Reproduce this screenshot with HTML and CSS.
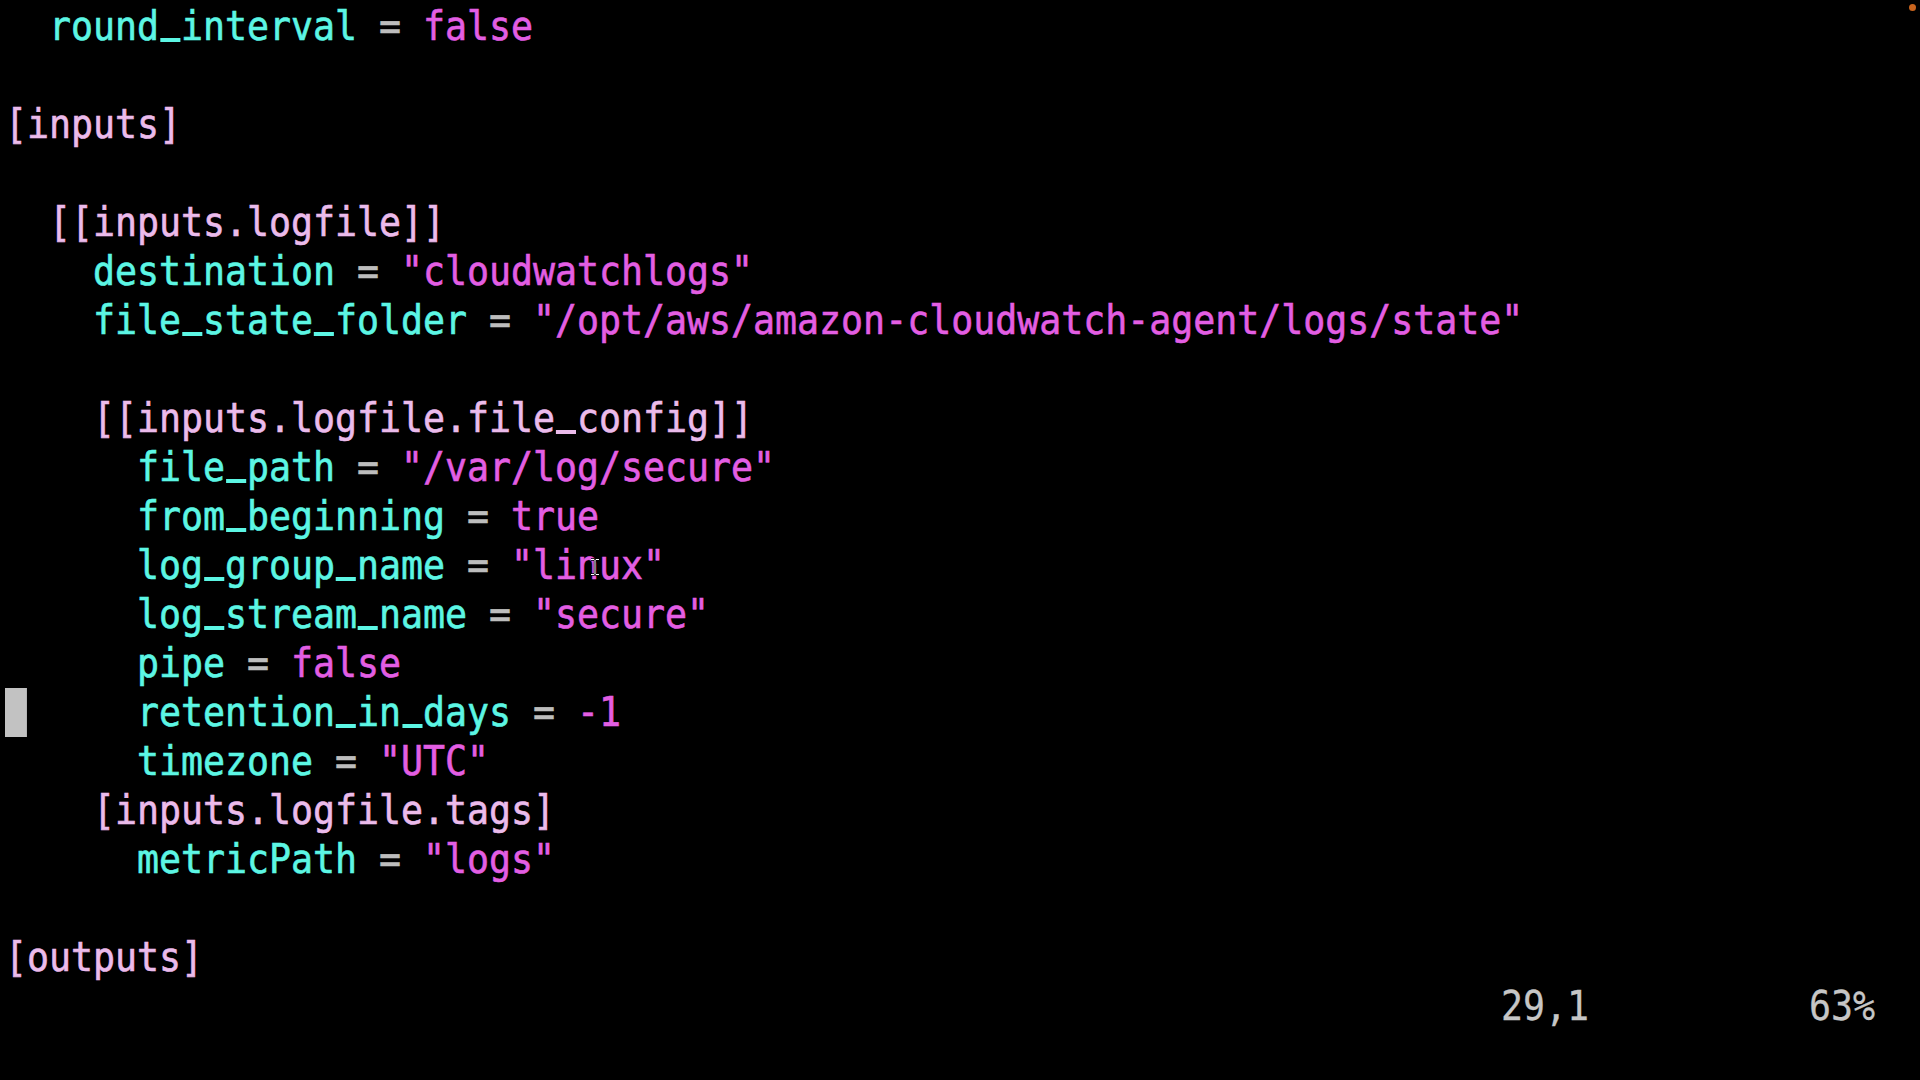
FILE: index.html
```html
<!DOCTYPE html>
<html>
<head>
<meta charset="utf-8">
<link rel="stylesheet" href="styles.css">
</head>
<body>
<div class="term">
<pre class="code"><span class="k">  round<span class="u">_</span>interval</span> <span class="e">=</span> <span class="v">false</span>

<span class="b">[inputs]</span>

<span class="b">  [[inputs.logfile]]</span>
<span class="k">    destination</span> <span class="e">=</span> <span class="v">"cloudwatchlogs"</span>
<span class="k">    file<span class="u">_</span>state<span class="u">_</span>folder</span> <span class="e">=</span> <span class="v">"/opt/aws/amazon-cloudwatch-agent/logs/state"</span>

<span class="b">    [[inputs.logfile.file<span class="u">_</span>config]]</span>
<span class="k">      file<span class="u">_</span>path</span> <span class="e">=</span> <span class="v">"/var/log/secure"</span>
<span class="k">      from<span class="u">_</span>beginning</span> <span class="e">=</span> <span class="v">true</span>
<span class="k">      log<span class="u">_</span>group<span class="u">_</span>name</span> <span class="e">=</span> <span class="v">"linux"</span>
<span class="k">      log<span class="u">_</span>stream<span class="u">_</span>name</span> <span class="e">=</span> <span class="v">"secure"</span>
<span class="k">      pipe</span> <span class="e">=</span> <span class="v">false</span>
<span class="cur"> </span><span class="k">     retention<span class="u">_</span>in<span class="u">_</span>days</span> <span class="e">=</span> <span class="v">-1</span>
<span class="k">      timezone</span> <span class="e">=</span> <span class="v">"UTC"</span>
<span class="b">    [inputs.logfile.tags]</span>
<span class="k">      metricPath</span> <span class="e">=</span> <span class="v">"logs"</span>

<span class="b">[outputs]</span>
<span class="s">                                                                    29,1          63%</span></pre>
<svg class="ibeam" width="10" height="18" viewBox="0 0 10 18"><path d="M1 1.5h3l1 1 1-1h3M5 2.5v13M1 16.5h3l1-1 1 1h3" fill="none" stroke="#000" stroke-width="2.4"/><path d="M1 1.5h3l1 1 1-1h3M5 2.5v13M1 16.5h3l1-1 1 1h3" fill="none" stroke="#fff" stroke-width="1"/></svg>
<div class="dot"></div>
</div>
</body>
</html>
```
FILE: styles.css
```css
html, body {
  margin: 0;
  padding: 0;
  background: #000;
  width: 1920px;
  height: 1080px;
  overflow: hidden;
}
.term {
  position: relative;
  width: 1920px;
  height: 1080px;
  padding: 2px 0 0 5px;
  box-sizing: border-box;
}
.code {
  margin: 0;
  font-family: "DejaVu Sans Mono", monospace;
  font-size: 40px;
  line-height: 49px;
  color: #c4c4c4;
  -webkit-text-stroke: 0.6px currentColor;
  transform: scaleX(0.9136);
  transform-origin: 0 0;
  white-space: pre;
}
.k { color: #5cf6e4; }
.v { color: #e35ee3; }
.b { color: #ebbbeb; }
.e { color: #bdbdbd; }
.s { color: #c6c6c6; -webkit-text-stroke: 0.3px currentColor; }
.u {
  position: relative;
  color: transparent;
  -webkit-text-stroke: 0;
}
.u::after {
  content: "";
  position: absolute;
  left: 1px;
  right: 1px;
  bottom: 7px;
  height: 4px;
}
.k .u::after { background: #5cf6e4; }
.b .u::after { background: #ebbbeb; }
.cur {
  background: #c2c2c2;
  display: inline-block;
  height: 49px;
  vertical-align: top;
}
.ibeam {
  position: absolute;
  left: 590px;
  top: 558px;
}
.dot {
  position: absolute;
  left: 1909px;
  top: 4px;
  width: 7px;
  height: 7px;
  border-radius: 50%;
  background: #c8641e;
}
```
